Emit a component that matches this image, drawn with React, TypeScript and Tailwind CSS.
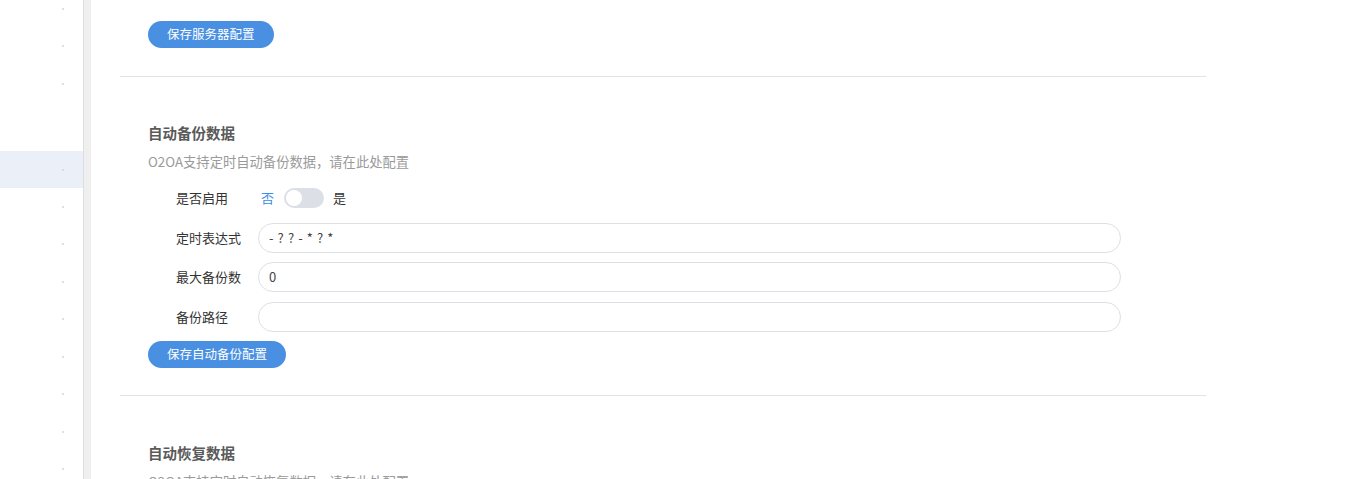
import React from "react";

const font = { fontFamily: '"Noto Sans CJK SC", "Noto Sans", sans-serif' };

function Dot() {
  return <span className="absolute left-[62px] top-1/2 h-[2px] w-[2px] -translate-y-1/2 rounded-full bg-[#d6d6d6]" />;
}

function Row({ active = false, dot = true }: { active?: boolean; dot?: boolean }) {
  return (
    <div className={`relative h-[37.5px] ${active ? "bg-[#ebf0f8]" : ""}`}>
      {dot && <Dot />}
    </div>
  );
}

function Label({ children }: { children: React.ReactNode }) {
  return <div className="w-[82px] shrink-0 text-[13px] leading-[20px] text-[#333]">{children}</div>;
}

function Input({ value }: { value: string }) {
  return (
    <div className="flex h-[30px] w-[863px] items-center rounded-full border border-[#dcdfe6] bg-white pl-[10px] text-[13px] tracking-[0.6px] text-[#444]">
      {value}
    </div>
  );
}

function Btn({ children }: { children: React.ReactNode }) {
  return (
    <div className="flex h-[27px] w-fit items-center rounded-full bg-[#4a90e2] px-[19px] text-[12.5px] leading-none text-white">
      {children}
    </div>
  );
}

export default function App() {
  return (
    <div className="flex h-[479px] w-full overflow-hidden bg-white" style={font}>
      <div className="w-[83px] shrink-0 bg-white">
        <div className="mt-[-10px]">
          <Row />
          <Row />
          <Row />
        </div>
        <div className="h-[48.5px]" />
        <div className="relative h-[37px] bg-[#ebf0f8]">
          <Dot />
        </div>
        <Row />
        <Row />
        <Row />
        <Row />
        <Row />
        <Row />
        <Row />
        <Row />
      </div>
      <div className="w-[8px] shrink-0 border-l border-[#dedede] bg-[#efefef]" />
      <div className="flex-1 pl-[29px]">
        <div className="w-[1086px]">
          <div className="pl-[28px] pt-[21px]">
            <Btn>保存服务器配置</Btn>
          </div>
          <div className="mt-[28px] h-px bg-[#e1e1e9]" />
          <div className="pl-[28px]">
            <div className="mt-[46px] text-[14.5px] font-bold leading-[20px] text-[#5a5a5a]">自动备份数据</div>
            <div className="mt-[9px] text-[13.3px] leading-[20px] text-[#9a9a9a]">O2OA支持定时自动备份数据，请在此处配置</div>
            <div className="pl-[28px]">
              <div className="mt-[16px] flex h-[20px] items-center">
                <Label>是否启用</Label>
                <span className="ml-[3px] text-[13px] text-[#3a8ee6]">否</span>
                <div className="relative ml-[10px] h-[20px] w-[40px] rounded-full bg-[#dcdfe6]">
                  <span className="absolute left-[2px] top-[2px] h-[16px] w-[16px] rounded-full bg-white" />
                </div>
                <span className="ml-[9px] text-[13px] text-[#333]">是</span>
              </div>
              <div className="mt-[15px] flex items-center">
                <Label>定时表达式</Label>
                <Input value="- ? ? - * ? *" />
              </div>
              <div className="mt-[9px] flex items-center">
                <Label>最大备份数</Label>
                <Input value="0" />
              </div>
              <div className="mt-[10px] flex items-center">
                <Label>备份路径</Label>
                <Input value="" />
              </div>
            </div>
            <div className="mt-[9px]">
              <Btn>保存自动备份配置</Btn>
            </div>
          </div>
          <div className="mt-[27px] h-px bg-[#e1e1e9]" />
          <div className="pl-[28px]">
            <div className="mt-[47px] text-[14.5px] font-bold leading-[20px] text-[#5a5a5a]">自动恢复数据</div>
            <div className="mt-[9px] text-[13.3px] leading-[20px] text-[#9a9a9a]">O2OA支持定时自动恢复数据，请在此处配置</div>
          </div>
        </div>
      </div>
    </div>
  );
}
